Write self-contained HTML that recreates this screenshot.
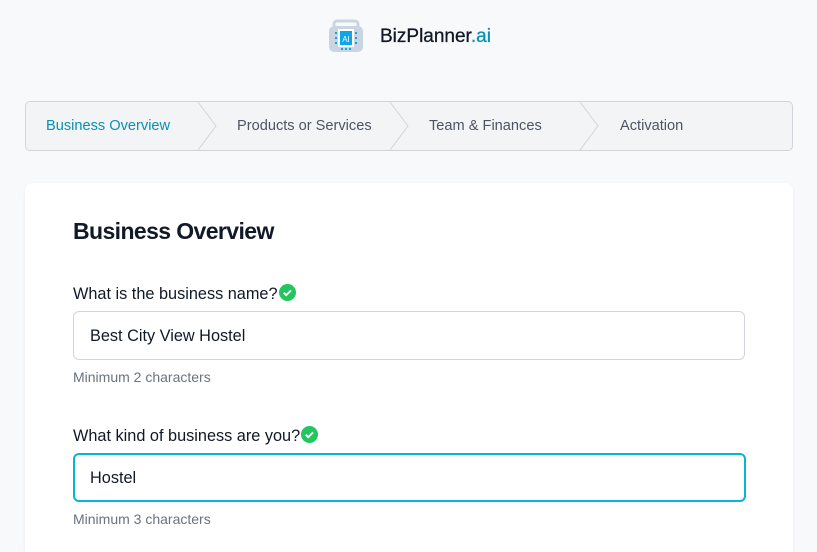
<!DOCTYPE html>
<html><head><style>
html,body{margin:0;width:817px;height:552px;overflow:hidden}
body{background:#f8f9fb;font-family:"Liberation Sans",sans-serif;position:relative}
.abs{position:absolute}
.bc{left:25px;top:101px;width:766px;height:48px;background:#f3f4f6;border:1px solid #d1d5db;border-radius:5px;overflow:hidden}
.bc span{position:absolute;top:16px;font-size:14.6px;color:#4b5563}
.card{left:25px;top:183px;width:768px;height:369px;background:#fff;border-radius:8px 8px 0 0;box-shadow:0 1px 3px rgba(0,0,0,.06)}
.lbl{font-size:16.3px;color:#111827}
.inp{left:73px;width:670px;height:48px;border:1px solid #d1d5db;border-radius:6px;background:#fff;box-sizing:border-box}
.inp span{position:absolute;left:16px;top:15px;font-size:16.3px;color:#111827}
.help{font-size:14px;color:#6b7280}
.ck{display:inline-block;vertical-align:-2px;margin-left:1px}
</style></head><body>
<svg class="abs" style="left:328px;top:18px" width="36" height="36" viewBox="0 0 36 36">
<rect x="6" y="3" width="24" height="8" rx="3" fill="none" stroke="#cbd5e1" stroke-width="3"/>
<rect x="1" y="8" width="34" height="26" rx="5" fill="#cbd5e1"/>
<rect x="10" y="11" width="16" height="18" fill="#fff"/>
<rect x="12" y="13" width="12" height="14" fill="#0ea5e9"/>
<g fill="#0ea5e9"><rect x="7" y="14" width="2" height="2"/><rect x="7" y="19" width="2" height="2"/><rect x="7" y="24" width="2" height="2"/><rect x="27" y="14" width="2" height="2"/><rect x="27" y="19" width="2" height="2"/><rect x="27" y="24" width="2" height="2"/><rect x="13" y="30" width="2" height="2"/><rect x="17" y="30" width="2" height="2"/><rect x="21" y="30" width="2" height="2"/></g>
<text x="18" y="24" font-size="8" fill="#fff" text-anchor="middle" font-family="Liberation Sans">AI</text>
</svg>
<div class="abs" style="left:380px;top:26px;font-size:19px;color:#111827;-webkit-text-stroke:0.3px #111827">BizPlanner<span style="color:#0891b2;-webkit-text-stroke:0.3px #0891b2">.ai</span></div>
<div class="abs bc">
<svg class="abs" style="left:0;top:0" width="766" height="48"><g fill="none" stroke="#d1d5db" stroke-width="1"><path d="M172 0 L190 24 L172 48"/><path d="M364 0 L382 24 L364 48"/><path d="M554 0 L572 24 L554 48"/></g></svg>
<span style="left:20px;color:#0891b2">Business Overview</span>
<span style="left:211px">Products or Services</span>
<span style="left:403px">Team &amp; Finances</span>
<span style="left:594px">Activation</span>
</div>
<div class="abs card"></div>
<div class="abs" style="left:73px;top:218px;font-size:23px;font-weight:bold;color:#111827;letter-spacing:-0.6px">Business Overview</div>
<div class="abs lbl" style="left:73px;top:284px">What is the business name?<svg class="ck" width="17" height="17" viewBox="0 0 16 16"><circle cx="8" cy="8" r="8" fill="#22c55e"/><path d="M4.5 8.2l2.3 2.3 4.5-4.5" stroke="#fff" stroke-width="1.8" fill="none"/></svg></div>
<div class="abs inp" style="top:311px;height:49px;width:672px"><span>Best City View Hostel</span></div>
<div class="abs help" style="left:73px;top:369px">Minimum 2 characters</div>
<div class="abs lbl" style="left:73px;top:426px">What kind of business are you?<svg class="ck" width="17" height="17" viewBox="0 0 16 16"><circle cx="8" cy="8" r="8" fill="#22c55e"/><path d="M4.5 8.2l2.3 2.3 4.5-4.5" stroke="#fff" stroke-width="1.8" fill="none"/></svg></div>
<div class="abs inp" style="top:453px;height:49px;width:673px;border:2px solid #06b6d4"><span style="left:15px;top:14px">Hostel</span></div>
<div class="abs help" style="left:73px;top:511px">Minimum 3 characters</div>
</body></html>
